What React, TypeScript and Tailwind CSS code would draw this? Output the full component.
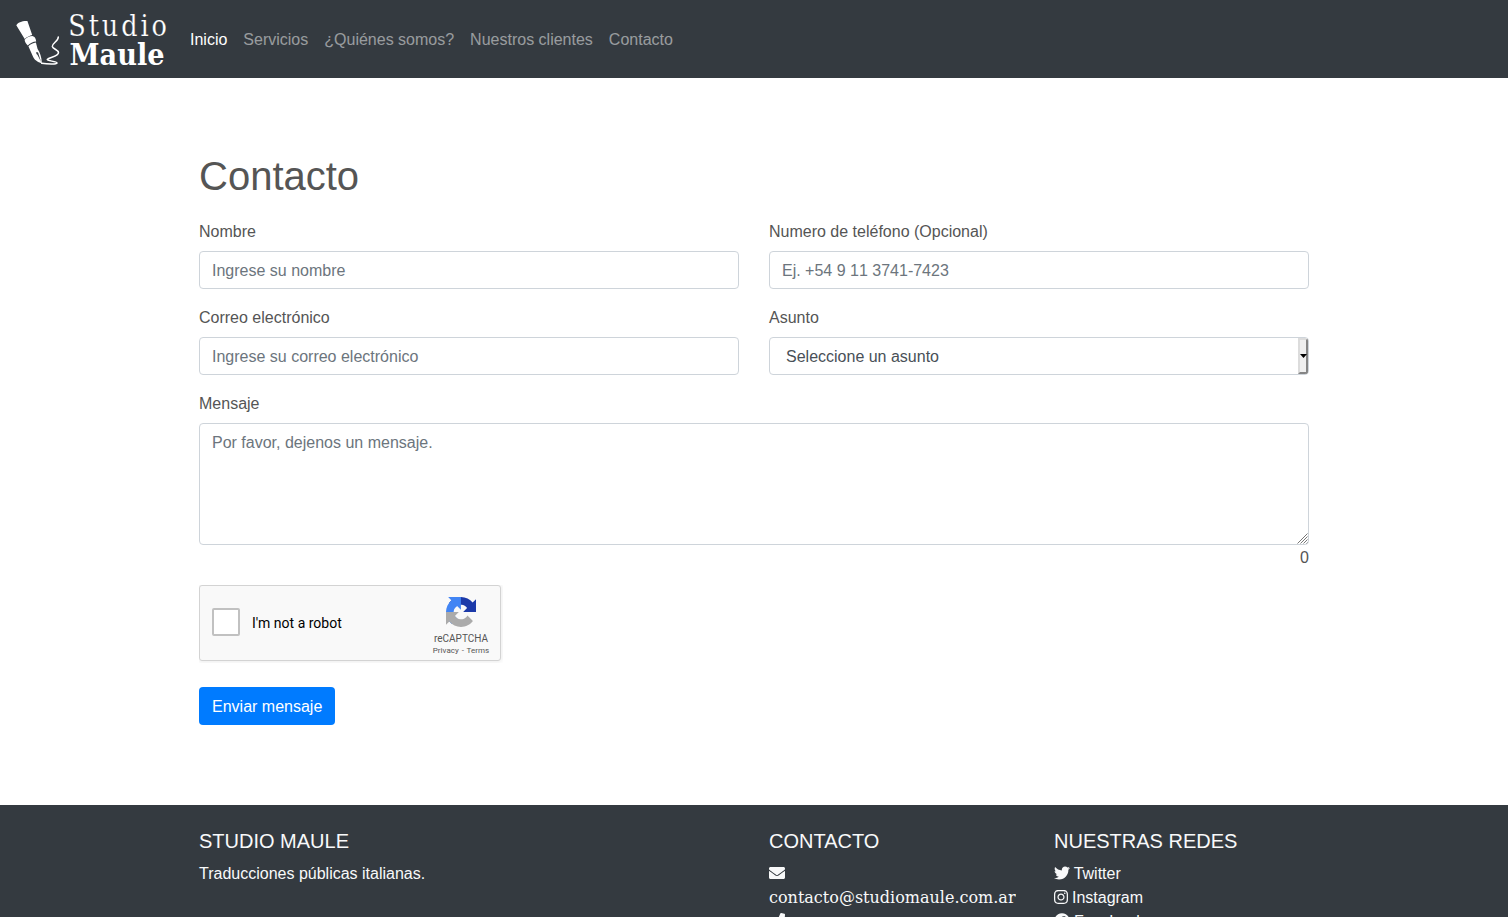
import React from 'react';
import { FaEnvelope, FaPhone, FaTwitter, FaInstagram, FaFacebook } from 'react-icons/fa';

const links = ['Inicio', 'Servicios', '¿Quiénes somos?', 'Nuestros clientes', 'Contacto'];
const field =
  'block h-[38px] w-full rounded-[4px] border border-[#ced4da] bg-white px-3 pt-[7px] pb-[5px] text-base leading-6 text-[#495057] placeholder:text-[#6c757d] placeholder:opacity-100 outline-none';

function Logo() {
  return (
    <svg width="152" height="60" viewBox="16 9 152 60" className="block overflow-visible" aria-label="Studio Maule">
      <g fill="#fff">
        <path d="M16.300 25.200C17.600 22.600 22.600 20.600 27.400 21l4.800 14c-1.900.6-5.400 2.100-7.500 3.900z" />
        <path d="M24.600 39.800c1.800-2.200 4.900-3.600 7.800-3.700 1.500.4 2.800 1.500 3.300 3.200l.5 2.200c-3 .1-6.500 1.800-8.400 4-1.600-1.200-2.900-3.500-3.200-5.700z" />
        <path fillRule="evenodd" d="M28.400 46.300c2.100-2.200 4.900-3.500 7.500-3.800l1.700 6.500c2.300 3.500 4 7.800 4.300 14.400-4.400-1.300-7.900-3.500-9.200-7.300zM36.500 52c-.6 1.100-.1 2.300.9 2.700l3.600 7-2.500-7.700c.2-1.100-.7-2.200-2-2z" />
      </g>
      <path d="M58.300 37c.2 4.200-6.200 6.100-6 9.400.3 2.700 6.200 3.200 6.200 6.400 0 3.600-9.400 4.400-11.300 6.600-.3 1.700 9.300 1.700 9.900 3.500.3 1.600-9 1.500-15.400.4" fill="none" stroke="#fff" strokeWidth="1.500" strokeLinecap="round" strokeLinejoin="round" />
      <text x="0" y="0" transform="translate(68.300 36) scale(0.880 1)" textLength="112" lengthAdjust="spacing" fill="#fff" stroke="#343a40" strokeWidth="0.200" className="font-['DejaVu_Serif',serif] text-[29px]">Studio</text>
      <text x="69.500" y="64.500" textLength="95" lengthAdjust="spacingAndGlyphs" fill="#fff" className="font-['DejaVu_Serif',serif] text-[29px] font-bold">Maule</text>
    </svg>
  );
}

function RecaptchaMark() {
  return (
    <svg width="30" height="30" viewBox="0 0 64 64" className="block">
      <path d="M64 31.955l-.016-1.370V4.687l-7.160 7.160C50.964 4.674 42.033.093 32.030.093c-10.400 0-19.640 4.960-25.478 12.640l11.736 11.860a15.550 15.550 0 0 1 4.754-5.334c2.050-1.600 4.952-2.906 8.968-2.906.485 0 .860.057 1.135.163 4.976.393 9.288 3.140 11.828 7.124l-8.307 8.307L64 31.953" fill="#1c3aa9" />
      <path d="M31.862.094l-1.370.016H4.594l7.160 7.160C4.580 13.130 0 22.060 0 32.063c0 10.400 4.960 19.640 12.640 25.478L24.500 45.805a15.550 15.550 0 0 1-5.334-4.754c-1.600-2.050-2.906-4.952-2.906-8.968 0-.485.057-.860.163-1.135.393-4.976 3.140-9.288 7.124-11.828l8.307 8.307L31.860.095" fill="#4285f4" />
      <path d="M.001 32.063l.016 1.370V59.330l7.160-7.160c5.860 7.173 14.790 11.754 24.793 11.754 10.400 0 19.640-4.960 25.478-12.640L45.712 39.425a15.550 15.550 0 0 1-4.754 5.334c-2.050 1.600-4.952 2.906-8.968 2.906-.485 0-.860-.057-1.135-.163-4.976-.393-9.288-3.140-11.828-7.124l8.307-8.307L0 32.065" fill="#ababab" />
    </svg>
  );
}

function Recaptcha() {
  return (
    <div className="h-[78px] w-[304px] overflow-hidden">
      <div className="flex h-[76px] w-[302px] rounded-[3px] border border-[#d3d3d3] bg-[#f9f9f9] font-[Roboto,sans-serif] shadow-[0_0_4px_1px_rgba(0,0,0,0.08)]">
        <div className="mt-[22px] ml-3 size-7 rounded-[2px] border-2 border-[#c1c1c1] bg-white" />
        <div className="mt-[29px] ml-3 w-[152px] text-[14px] leading-[17px] text-black">I'm not a robot</div>
        <div className="mt-[11px] ml-[18px] flex w-[78px] flex-col items-center text-[#555]">
          <RecaptchaMark />
          <div className="mt-[7px] text-[10px] leading-[10px]">reCAPTCHA</div>
          <div className="mt-[3px] text-[8px] leading-[8px] tracking-[0.050px] whitespace-pre [word-spacing:0.700px]">Privacy - Terms</div>
        </div>
      </div>
    </div>
  );
}

function Label({ children }: { children: React.ReactNode }) {
  return <label className="mb-[7px] block leading-6">{children}</label>;
}

export default function App() {
  return (
    <div className="flex h-[917px] flex-col overflow-hidden bg-white font-['Liberation_Sans',Arial,sans-serif] text-base leading-6 text-[#555]">
      <nav className="flex h-[78px] shrink-0 items-center bg-[#343a40] pl-4">
        <Logo />
        <div className="ml-[22px] flex gap-4 pt-0.5">
          {links.map((l, i) => (
            <a key={l} className={i === 0 ? 'text-white' : 'text-white/50'}>{l}</a>
          ))}
        </div>
      </nav>
      <main className="mx-auto h-[727px] w-[1110px] shrink-0 pt-[74px]">
        <h1 className="mb-[20px] text-[40px] leading-[48px]">Contacto</h1>
        <form>
          <div className="grid grid-cols-2 gap-x-[30px] gap-y-[17px]">
            <div>
              <Label>Nombre</Label>
              <input className={field} placeholder="Ingrese su nombre" />
            </div>
            <div>
              <Label>Numero de teléfono (Opcional)</Label>
              <div className="[&>input]:[font-kerning:none]">
                <input className={field} placeholder="Ej. +54 9 11 3741-7423" />
              </div>
            </div>
            <div>
              <Label>Correo electrónico</Label>
              <input className={field} placeholder="Ingrese su correo electrónico" />
            </div>
            <div>
              <Label>Asunto</Label>
              <div className="flex h-[38px] overflow-hidden rounded-[4px] border border-[#ced4da] bg-white">
                <div className="flex-1 pt-[7px] pl-4 text-[#495057]">Seleccione un asunto</div>
                <div className="flex w-[10px] items-center justify-center border-2 border-t-[#dcdcdc] border-r-[#858585] border-b-[#858585] border-l-[#dcdcdc] bg-[#efefef]">
                  <svg width="7" height="4" viewBox="0 0 7 4" className="shrink-0"><path d="M0 0h7L3.500 4z" fill="#000" /></svg>
                </div>
              </div>
            </div>
          </div>
          <div className="mt-[17px]">
            <Label>Mensaje</Label>
            <div className="relative">
              <textarea className="block h-[122px] w-full resize-none rounded-[4px] border border-[#ced4da] px-3 pt-[7px] pb-[5px] outline-none placeholder:text-[#6c757d] placeholder:opacity-100" placeholder="Por favor, dejenos un mensaje." />
              <svg width="11" height="11" viewBox="0 0 11 11" className="absolute right-px bottom-px">
                <path d="M0.500 10.500L10.500 0.500M3.500 10.500L10.500 3.500M6.500 10.500L10.500 6.500M9.500 10.500L10.500 9.500" stroke="#777" strokeWidth="1" />
              </svg>
            </div>
            <div className="pt-px text-right">0</div>
          </div>
          <div className="mt-[15px]"><Recaptcha /></div>
          <button type="button" className="mt-6 block h-[38px] rounded-[4px] bg-[#007bff] px-[13px] pt-0.5 text-white">Enviar mensaje</button>
        </form>
      </main>
      <footer className="h-[112px] shrink-0 overflow-hidden bg-[#343a40] text-[#f8f9fa]">
        <div className="mx-auto grid w-[1110px] grid-cols-[540px_255px_255px] gap-x-[30px] pt-6">
          <div>
            <h5 className="mb-[9px] text-xl leading-6">STUDIO MAULE</h5>
            <p>Traducciones públicas italianas.</p>
          </div>
          <div>
            <h5 className="mb-[9px] text-xl leading-6">CONTACTO</h5>
            <div className="h-6"><FaEnvelope className="inline-block align-[-2px]" /></div>
            <div className="h-6 w-[247px] overflow-hidden font-['DejaVu_Serif',serif] whitespace-nowrap">contacto@studiomaule.com.ar</div>
            <div><FaPhone className="inline-block align-[-2px]" /></div>
          </div>
          <div>
            <h5 className="mb-[9px] text-xl leading-6">NUESTRAS REDES</h5>
            <div className="h-6"><FaTwitter className="-mr-[0.500px] inline-block align-[-2px]" /> Twitter</div>
            <div className="h-6"><FaInstagram className="-mr-[1.500px] -ml-px inline-block align-[-2px]" /> Instagram</div>
            <div className="h-6"><FaFacebook className="-mr-[0.500px] inline-block align-[-2px]" /> Facebook</div>
          </div>
        </div>
      </footer>
    </div>
  );
}
